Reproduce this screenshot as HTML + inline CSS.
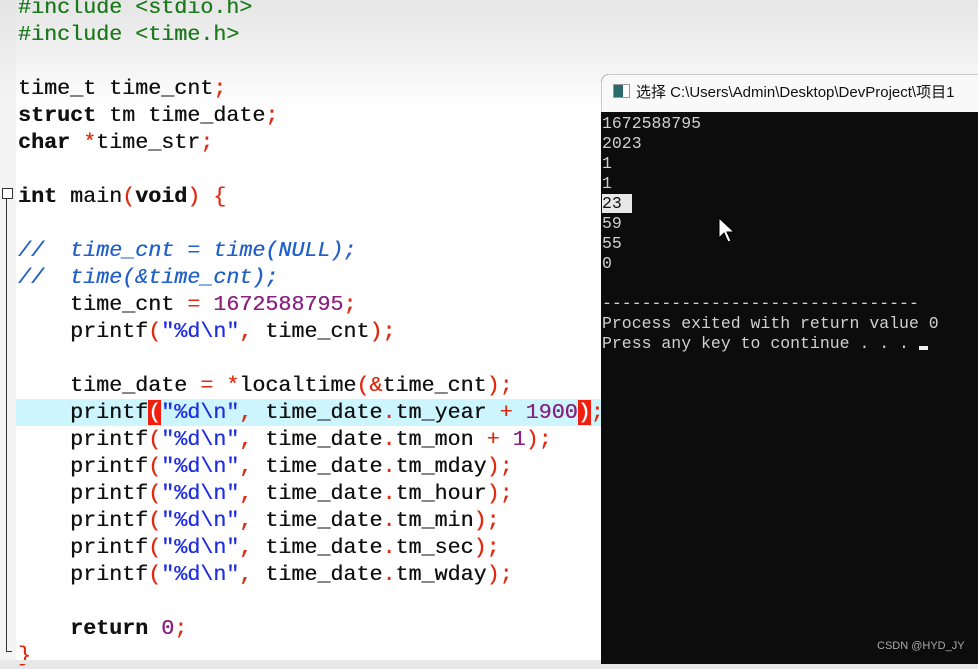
<!DOCTYPE html>
<html><head><meta charset="utf-8"><style>
*{margin:0;padding:0}
body{width:978px;height:664px;overflow:hidden;position:relative;background:linear-gradient(#e6e6e6 0px,#f2f2f2 60px,#fff 110px);font-family:"Liberation Mono",monospace}
.gut{position:absolute;left:0;top:0;width:16px;height:664px;background:linear-gradient(#e4e4e4,#f4f4f4 100px,#f4f4f4)}
.hl{position:absolute;left:16px;top:399px;width:586px;height:27px;background:#ccf5fd}
.l{position:absolute;left:18px;font-size:21.7px;line-height:27px;height:27px;white-space:pre;color:#111;text-shadow:0.3px 0 0 currentColor}
.k{font-weight:bold}
.p{color:#1c7a1c}
.c{color:#2060c8;font-style:italic}
.s{color:#1e2ee0}
.n{color:#8a2080}
.r{color:#e02a10}
.rb{background:#f02010;color:#fff}
.con{position:absolute;left:601px;top:74px;width:377px;height:590px;background:#0c0c0c;border-radius:8px 0 0 0;overflow:hidden}
.tb{height:37px;background:#f9f9f9;border-top:1px solid #ccc;border-left:1px solid #ccc;border-radius:8px 0 0 0;font-family:"Liberation Sans","Noto Sans CJK SC",sans-serif;font-size:15px;color:#111;line-height:36px;white-space:nowrap}
.ct{position:absolute;left:1px;font-family:"Liberation Mono",monospace;font-size:16.5px;color:#d0d0d0;white-space:pre;line-height:20px}
</style></head><body>
<div class="gut"></div>
<div style="position:absolute;left:2px;top:188px;width:9px;height:9px;border:1px solid #333;background:#fff"></div>
<div style="position:absolute;left:6px;top:199px;width:1px;height:452px;background:#333"></div>
<div style="position:absolute;left:6px;top:651px;width:6px;height:1px;background:#333"></div>
<div class="hl"></div>
<div class="l p" style="top:-6px">#include &lt;stdio.h&gt;</div>
<div class="l p" style="top:21px">#include &lt;time.h&gt;</div>
<div class="l" style="top:75px">time_t time_cnt<span class="r">;</span></div>
<div class="l" style="top:102px"><span class="k">struct</span> tm time_date<span class="r">;</span></div>
<div class="l" style="top:129px"><span class="k">char</span> <span class="r">*</span>time_str<span class="r">;</span></div>
<div class="l" style="top:183px"><span class="k">int</span> main<span class="r">(</span><span class="k">void</span><span class="r">)</span> <span class="r">{</span></div>
<div class="l c" style="top:237px">//  time_cnt = time(NULL);</div>
<div class="l c" style="top:264px">//  time(&amp;time_cnt);</div>
<div class="l" style="top:291px">    time_cnt <span class="r">=</span> <span class="n">1672588795</span><span class="r">;</span></div>
<div class="l" style="top:318px">    printf<span class="r">(</span><span class="s">"%d\n"</span><span class="r">,</span> time_cnt<span class="r">);</span></div>
<div class="l" style="top:372px">    time_date <span class="r">=</span> <span class="r">*</span>localtime<span class="r">(&amp;</span>time_cnt<span class="r">);</span></div>
<div class="l" style="top:399px">    printf<span class="rb">(</span><span class="s">"%d\n"</span><span class="r">,</span> time_date<span class="r">.</span>tm_year <span class="r">+</span> <span class="n">1900</span><span class="rb">)</span><span class="r">;</span></div>
<div class="l" style="top:426px">    printf<span class="r">(</span><span class="s">"%d\n"</span><span class="r">,</span> time_date<span class="r">.</span>tm_mon <span class="r">+</span> <span class="n">1</span><span class="r">);</span></div>
<div class="l" style="top:453px">    printf<span class="r">(</span><span class="s">"%d\n"</span><span class="r">,</span> time_date<span class="r">.</span>tm_mday<span class="r">);</span></div>
<div class="l" style="top:480px">    printf<span class="r">(</span><span class="s">"%d\n"</span><span class="r">,</span> time_date<span class="r">.</span>tm_hour<span class="r">);</span></div>
<div class="l" style="top:507px">    printf<span class="r">(</span><span class="s">"%d\n"</span><span class="r">,</span> time_date<span class="r">.</span>tm_min<span class="r">);</span></div>
<div class="l" style="top:534px">    printf<span class="r">(</span><span class="s">"%d\n"</span><span class="r">,</span> time_date<span class="r">.</span>tm_sec<span class="r">);</span></div>
<div class="l" style="top:561px">    printf<span class="r">(</span><span class="s">"%d\n"</span><span class="r">,</span> time_date<span class="r">.</span>tm_wday<span class="r">);</span></div>
<div class="l" style="top:615px">    <span class="k">return</span> <span class="n">0</span><span class="r">;</span></div>
<div class="l r" style="top:642px">}</div>
<div style="position:absolute;left:0;top:660px;width:601px;height:4px;background:#e8e8e8"></div>
<div class="con">
<div class="tb"><span style="display:inline-block;width:15px;height:12px;border:1px solid #999;background:linear-gradient(90deg,#2a6a6a 60%,#fff 60%);vertical-align:-1px;margin:0 6px 0 11px"></span>选择 C:\Users\Admin\Desktop\DevProject\项目1</div>
<div class="ct" style="top:40px">1672588795
2023
1
1
<span style="background:#e8e8e8;color:#111">23 </span>
59
55
0

--------------------------------
Process exited with return value 0
Press any key to continue . . . <span style="display:inline-block;width:9px;height:4px;background:#eee;vertical-align:-2px"></span></div>
<svg style="position:absolute;left:117px;top:143px" width="20" height="30" viewBox="0 0 20 30"><path d="M1 1 L1 21 L6 16 L10 25 L13 24 L9 15 L16 15 Z" fill="#fff" stroke="#000" stroke-width="1"/></svg>
<div style="position:absolute;left:276px;top:566px;font-family:'Liberation Sans',sans-serif;font-size:11px;color:#aaa">CSDN @HYD_JY</div>
</div>
</body></html>
